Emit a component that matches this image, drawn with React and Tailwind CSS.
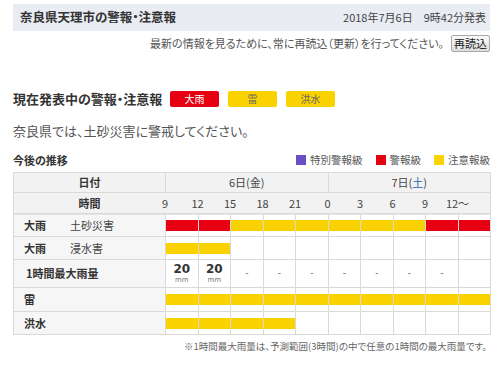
import React from 'react';

const TIMES = ['9', '12', '15', '18', '21', '0', '3', '6', '9', '12〜'];
const R = 'bg-[#e60012]';
const Y = 'bg-[#fad200]';

const ROWS = [
  { main: '大雨', sub: '土砂災害', bars: [R, R, Y, Y, Y, Y, Y, Y, R, R], h: 'h-[23px]' },
  { main: '大雨', sub: '浸水害', bars: [Y, Y, null, null, null, null, null, null, null, null], h: 'h-[23px]' },
];

function Legend({ color, label }) {
  return (
    <div className="flex items-center gap-[4px]">
      <span className={`w-[10px] h-[10px] ${color}`} />
      <span>{label}</span>
    </div>
  );
}

function BarCells({ bars }) {
  return bars.map((b, i) => (
    <div key={i} className="border-l border-[#d9d9d9] flex items-center">
      {b && <div className={`w-full h-[11px] ${b}`} />}
    </div>
  ));
}

export default function App() {
  return (
    <div className="w-[500px] h-[370px] bg-white text-[#333] font-['Noto_Sans_CJK_JP',sans-serif] [font-feature-settings:'palt'] overflow-hidden">
      <div className="pt-[4px] pl-[13px] pr-[10px]">
        <div className="h-[27px] bg-[#e9ecf3] flex items-center justify-between pl-[7px] pr-[4px]">
          <h1 className="text-[12.5px] font-bold text-[#333]">奈良県天理市の警報・注意報</h1>
          <span className="text-[11px] text-[#444]">2018年7月6日　9時42分発表</span>
        </div>

        <div className="mt-[4px] flex items-center justify-end gap-[7px]">
          <span className="text-[11px] text-[#555]">最新の情報を見るために、常に再読込（更新）を行ってください。</span>
          <button className="h-[17px] px-[2px] text-[11px] leading-none text-[#222] border border-[#a8a8a8] rounded-[2px] bg-gradient-to-b from-[#fafafa] to-[#dcdcdc]">
            再読込
          </button>
        </div>

        <div className="mt-[37px] flex items-center">
          <h2 className="text-[13px] font-bold text-[#333] w-[157px]">現在発表中の警報・注意報</h2>
          <div className="flex gap-[9px]">
            <span className="w-[49px] h-[16px] rounded-[2px] bg-[#e60012] text-white text-[10px] flex items-center justify-center">大雨</span>
            <span className="w-[49px] h-[16px] rounded-[2px] bg-[#fad200] text-[#666] text-[10px] flex items-center justify-center">雷</span>
            <span className="w-[49px] h-[16px] rounded-[2px] bg-[#fad200] text-[#666] text-[10px] flex items-center justify-center">洪水</span>
          </div>
        </div>

        <p className="mt-[12px] text-[13px] leading-[20px] text-[#555]">奈良県では、土砂災害に警戒してください。</p>

        <div className="mt-[11px] flex items-center justify-between">
          <h3 className="text-[11px] font-bold text-[#333]">今後の推移</h3>
          <div className="flex items-center gap-[13px] text-[10.5px] text-[#555]">
            <Legend color="bg-[#6a4fc4]" label="特別警報級" />
            <Legend color="bg-[#e60012]" label="警報級" />
            <Legend color="bg-[#fad200]" label="注意報級" />
          </div>
        </div>

        <div className="mt-[4px] w-[478px] border border-[#d9d9d9] text-[11px]">
          <div className="grid grid-cols-[151px_repeat(10,1fr)] h-[20px] bg-[#f2f2f2] border-b border-[#d9d9d9]">
            <div className="flex items-center justify-center font-bold">日付</div>
            <div className="col-span-5 border-l border-[#d9d9d9] flex items-center justify-center text-[#444]">6日(金)</div>
            <div className="col-span-5 border-l border-[#d9d9d9] flex items-center justify-center text-[#444]">
              <span>7日(<span className="text-[#2a64b0]">土</span>)</span>
            </div>
          </div>
          <div className="grid grid-cols-[151px_repeat(10,1fr)] h-[21px] bg-[#f2f2f2] border-b border-[#d9d9d9]">
            <div className="flex items-center justify-center font-bold">時間</div>
            {TIMES.map((t, i) => (
              <div key={i} className="flex items-center text-[#444]">
                <span className="inline-block -translate-x-1/2 whitespace-nowrap">{t}</span>
              </div>
            ))}
          </div>

          {ROWS.map((r, i) => (
            <div key={i} className={`grid grid-cols-[151px_repeat(10,1fr)] ${r.h} border-b border-[#d9d9d9] ${i === 0 ? 'border-t border-t-[#e4e4e4]' : ''}`}>
              <div className="bg-[#f6f6f6] flex items-center pl-[10px]">
                <span className="font-bold w-[46px]">{r.main}</span>
                <span className="text-[#444]">{r.sub}</span>
              </div>
              <BarCells bars={r.bars} />
            </div>
          ))}

          <div className="grid grid-cols-[151px_repeat(10,1fr)] h-[28px] border-b border-[#d9d9d9]">
            <div className="bg-[#f6f6f6] flex items-center pl-[12px] font-bold">1時間最大雨量</div>
            {['20', '20', '-', '-', '-', '-', '-', '-', '-', ''].map((v, i) => (
              <div key={i} className="border-l border-[#d9d9d9] flex flex-col items-center justify-center font-['DejaVu_Sans',sans-serif]">
                {v === '20' ? (
                  <>
                    <span className="text-[12px] font-bold leading-[14px] text-[#333]">20</span>
                    <span className="text-[7px] leading-[9px] text-[#777]">mm</span>
                  </>
                ) : (
                  <span className="text-[9px] text-[#666]">{v}</span>
                )}
              </div>
            ))}
          </div>

          <div className="grid grid-cols-[151px_repeat(10,1fr)] h-[24px] border-b border-[#d9d9d9]">
            <div className="bg-[#f6f6f6] flex items-center pl-[10px] font-bold">雷</div>
            <BarCells bars={[Y, Y, Y, Y, Y, Y, Y, Y, Y, Y]} />
          </div>
          <div className="grid grid-cols-[151px_repeat(10,1fr)] h-[22px]">
            <div className="bg-[#f6f6f6] flex items-center pl-[10px] font-bold">洪水</div>
            <BarCells bars={[Y, Y, Y, Y, null, null, null, null, null, null]} />
          </div>
        </div>

        <p className="mt-[4px] text-right text-[9.5px] text-[#666] pr-[3px]">※1時間最大雨量は、予測範囲(3時間)の中で任意の1時間の最大雨量です。</p>
      </div>
    </div>
  );
}
